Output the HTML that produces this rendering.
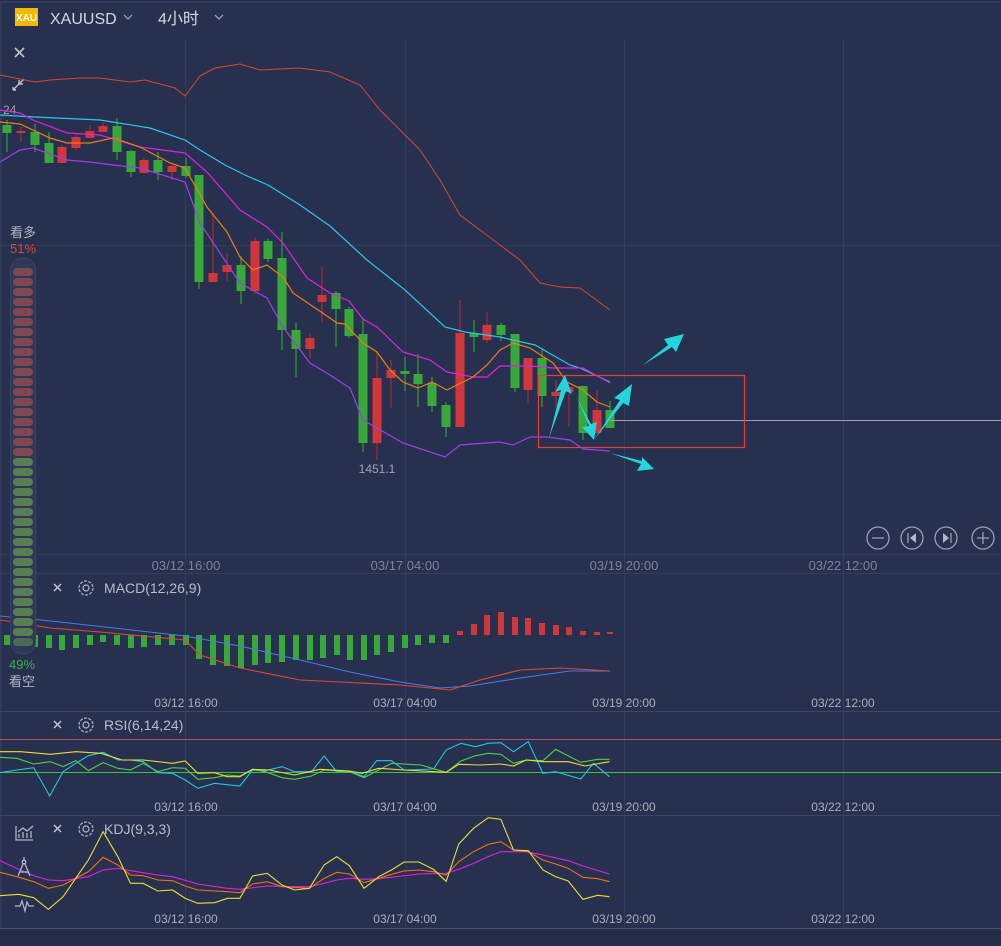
<!DOCTYPE html>
<html><head><meta charset="utf-8"><style>
html,body{margin:0;padding:0;background:#28304f;width:1001px;height:946px;overflow:hidden}
svg{display:block}
text{font-family:"Liberation Sans","Noto Sans CJK SC",sans-serif}
</style></head><body>
<svg width="1001" height="946" viewBox="0 0 1001 946" xmlns="http://www.w3.org/2000/svg">
<rect width="1001" height="946" fill="#28304f"/>
<rect y="929" width="1001" height="17" fill="#252c47"/>
<line x1="0" y1="2" x2="1001" y2="2" stroke="#3d4564"/>
<line x1="1" y1="2" x2="1" y2="929" stroke="#3d4564"/>
<line x1="0" y1="928.5" x2="1001" y2="928.5" stroke="#4a5270"/>
<!-- grid -->
<g stroke="#343c5c" stroke-width="1">
<line x1="185.5" y1="40" x2="185.5" y2="928"/><line x1="405.5" y1="40" x2="405.5" y2="928"/>
<line x1="624.5" y1="40" x2="624.5" y2="928"/><line x1="843.5" y1="40" x2="843.5" y2="928"/>
<line x1="0" y1="245.5" x2="1001" y2="245.5"/>
<line x1="0" y1="554.5" x2="1001" y2="554.5"/>
<line x1="0" y1="573.5" x2="1001" y2="573.5"/>
<line x1="0" y1="711.5" x2="1001" y2="711.5" stroke="#3d4564"/>
<line x1="0" y1="815.5" x2="1001" y2="815.5" stroke="#3d4564"/>
</g>
<!-- top bar -->
<rect x="15" y="8" width="23" height="18" fill="#f5b800"/>
<text x="26.5" y="21" font-size="10" fill="#fff" text-anchor="middle" font-weight="bold">XAU</text>
<text x="50" y="24" font-size="16" fill="#d4d8e0">XAUUSD</text>
<path d="M124 15l4 4 4-4" stroke="#9aa0b0" fill="none" stroke-width="1.3"/>
<text x="158" y="24" font-size="16" fill="#d4d8e0">4小时</text>
<path d="M215 15l4 4 4-4" stroke="#9aa0b0" fill="none" stroke-width="1.3"/>
<path d="M15 48l9 9M24 48l-9 9" stroke="#c0c4cc" stroke-width="1.6"/>
<path d="M13 90l6-6M13 90v-3M13 90h3M24 79l-5 5M19 84h4M19 84v-4" stroke="#c0c4cc" stroke-width="1.4" fill="none"/>
<text x="3" y="114" font-size="12" fill="#9aa0b0">24</text>
<!-- upper red band -->
<polyline fill="none" stroke="#d4472e" stroke-width="1" points="0,75 35,82 50,80 80,78 100,78 115,80 130,82 145,80 160,84 175,88 185,96 200,76 215,68 240,64 260,70 300,68 330,72 360,85 380,110 400,130 420,150 440,180 460,215 480,230 500,245 520,260 540,283 560,287 580,288 610,310"/>
<!-- candles -->
<g stroke-width="1.5">
<g stroke="#2d8a34" fill="#38a83a">
<line x1="7" y1="120" x2="7" y2="152"/><rect x="2.5" y="125" width="9" height="8" stroke="none"/>
<line x1="35" y1="124" x2="35" y2="152"/><rect x="30.5" y="132" width="9" height="13" stroke="none"/>
<line x1="49" y1="132" x2="49" y2="163"/><rect x="44.5" y="143" width="9" height="20" stroke="none"/>
<line x1="117" y1="118" x2="117" y2="160"/><rect x="112.5" y="126" width="9" height="26" stroke="none"/>
<line x1="131" y1="150" x2="131" y2="177"/><rect x="126.5" y="151" width="9" height="21" stroke="none"/>
<line x1="158" y1="152" x2="158" y2="180"/><rect x="153.5" y="160" width="9" height="12" stroke="none"/>
<line x1="186" y1="158" x2="186" y2="178"/><rect x="181.5" y="166" width="9" height="10" stroke="none"/>
<line x1="199" y1="175" x2="199" y2="289"/><rect x="194.5" y="175" width="9" height="107" stroke="none"/>
<line x1="241" y1="256" x2="241" y2="304"/><rect x="236.5" y="265" width="9" height="26" stroke="none"/>
<line x1="268" y1="239" x2="268" y2="262"/><rect x="263.5" y="241" width="9" height="18" stroke="none"/>
<line x1="282" y1="232" x2="282" y2="350"/><rect x="277.5" y="258" width="9" height="72" stroke="none"/>
<line x1="296" y1="323" x2="296" y2="377"/><rect x="291.5" y="330" width="9" height="19" stroke="none"/>
<line x1="336" y1="291" x2="336" y2="347"/><rect x="331.5" y="293" width="9" height="16" stroke="none"/>
<line x1="349" y1="307" x2="349" y2="338"/><rect x="344.5" y="309" width="9" height="27" stroke="none"/>
<line x1="363" y1="318" x2="363" y2="452"/><rect x="358.5" y="334" width="9" height="109" stroke="none"/>
<line x1="405" y1="357" x2="405" y2="391"/><rect x="400.5" y="371" width="9" height="3" stroke="none"/>
<line x1="418" y1="354" x2="418" y2="407"/><rect x="413.5" y="374" width="9" height="10" stroke="none"/>
<line x1="432" y1="377" x2="432" y2="412"/><rect x="427.5" y="383" width="9" height="23" stroke="none"/>
<line x1="446" y1="402" x2="446" y2="437"/><rect x="441.5" y="405" width="9" height="22" stroke="none"/>
<line x1="474" y1="320" x2="474" y2="352"/><rect x="469.5" y="333" width="9" height="4" stroke="none"/>
<line x1="501" y1="323" x2="501" y2="341"/><rect x="496.5" y="325" width="9" height="10" stroke="none"/>
<line x1="515" y1="334" x2="515" y2="392"/><rect x="510.5" y="334" width="9" height="54" stroke="none"/>
<line x1="542" y1="349" x2="542" y2="407"/><rect x="537.5" y="358" width="9" height="38" stroke="none"/>
<line x1="583" y1="386" x2="583" y2="440"/><rect x="578.5" y="386" width="9" height="47" stroke="none"/>
<line x1="610" y1="401" x2="610" y2="428"/><rect x="605.5" y="410" width="9" height="18" stroke="none"/>
</g>
<g stroke="#8e2c33" fill="#d1363a">
<line x1="21" y1="127" x2="21" y2="142"/><rect x="16.5" y="131" width="9" height="2" stroke="none"/>
<line x1="62" y1="145" x2="62" y2="163"/><rect x="57.5" y="147" width="9" height="16" stroke="none"/>
<line x1="76" y1="135" x2="76" y2="150"/><rect x="71.5" y="137" width="9" height="11" stroke="none"/>
<line x1="90" y1="125" x2="90" y2="138"/><rect x="85.5" y="131" width="9" height="7" stroke="none"/>
<line x1="103" y1="122" x2="103" y2="132"/><rect x="98.5" y="126" width="9" height="6" stroke="none"/>
<line x1="144" y1="158" x2="144" y2="173"/><rect x="139.5" y="160" width="9" height="13" stroke="none"/>
<line x1="172" y1="164" x2="172" y2="180"/><rect x="167.5" y="166" width="9" height="6" stroke="none"/>
<line x1="213" y1="213" x2="213" y2="282"/><rect x="208.5" y="273" width="9" height="9" stroke="none"/>
<line x1="227" y1="253" x2="227" y2="281"/><rect x="222.5" y="265" width="9" height="7" stroke="none"/>
<line x1="255" y1="237" x2="255" y2="294"/><rect x="250.5" y="241" width="9" height="50" stroke="none"/>
<line x1="310" y1="333" x2="310" y2="358"/><rect x="305.5" y="338" width="9" height="11" stroke="none"/>
<line x1="322" y1="267" x2="322" y2="322"/><rect x="317.5" y="295" width="9" height="7" stroke="none"/>
<line x1="377" y1="352" x2="377" y2="460"/><rect x="372.5" y="378" width="9" height="65" stroke="none"/>
<line x1="391" y1="360" x2="391" y2="408"/><rect x="386.5" y="370" width="9" height="8" stroke="none"/>
<line x1="460" y1="300" x2="460" y2="427"/><rect x="455.5" y="333" width="9" height="94" stroke="none"/>
<line x1="487" y1="312" x2="487" y2="343"/><rect x="482.5" y="325" width="9" height="15" stroke="none"/>
<line x1="528" y1="358" x2="528" y2="403"/><rect x="523.5" y="358" width="9" height="32" stroke="none"/>
<line x1="556" y1="380" x2="556" y2="407"/><rect x="551.5" y="392" width="9" height="4" stroke="none"/>
<line x1="569" y1="387" x2="569" y2="427"/><rect x="564.5" y="387" width="9" height="5" stroke="none"/>
<line x1="597" y1="390" x2="597" y2="433"/><rect x="592.5" y="410" width="9" height="23" stroke="none"/>
</g>
</g>
<!-- MAs -->
<g fill="none" stroke-width="1.2">
<polyline stroke="#28c8e8" points="0,115 35,117 100,120 150,128 185,140 200,150 225,165 245,175 268,185 300,205 330,226 367,260 405,290 445,327 465,332 500,337 535,345 570,365 580,368 610,382"/>
<polyline stroke="#e020e0" points="0,110 20,113 33,120 67,133 100,135 140,147 185,153 207,172 240,210 267,227 283,243 307,278 330,293 349,301 363,319 377,327 403,352 430,360 447,372 473,377 487,377 500,366 530,366 553,368 583,368 610,383"/>
<polyline stroke="#f07c10" points="0,122 20,124 50,138 67,143 90,143 113,138 140,147 170,163 185,168 207,207 227,232 240,257 253,270 267,265 283,277 293,293 330,318 337,323 345,324 363,343 377,352 390,370 403,382 418,388 432,382 447,390 473,377 487,365 500,350 513,343 530,348 553,363 567,382 583,390 597,402 610,407"/>
<polyline stroke="#9b40e8" points="0,162 20,150 33,148 67,160 90,162 113,165 140,168 185,182 200,223 240,283 267,298 283,327 310,363 330,375 350,388 363,420 403,443 445,457 460,445 500,442 513,445 530,437 547,437 570,440 583,449 610,451"/>
</g>
<text x="377" y="473" font-size="12" fill="#a0a6b4" text-anchor="middle">1451.1</text>
<line x1="610" y1="420.5" x2="1001" y2="420.5" stroke="#9aa0b0" stroke-width="1"/>
<rect x="538.5" y="375.5" width="206" height="72" fill="none" stroke="#e0403a" stroke-width="1.2"/>
<!-- arrows -->
<g fill="#22d6dc">
<polygon points="643,365 668,345 664,339 684,334 676,352 672,347"/>
<polygon points="549,438 561,390 555,392 565,375 572,394 566,391"/>
<polygon points="577,398 589,426 582,427 594,440 597,422 591,424"/>
<polygon points="594,440 620,400 614,398 632,384 629,406 623,403"/>
<polygon points="610,453 641,464 637,471 654,469 642,457 642,461"/>
</g>
<!-- zoom buttons -->
<g fill="none" stroke="#9aa0b0" stroke-width="1.3">
<circle cx="878" cy="538" r="11"/><circle cx="912" cy="538" r="11"/><circle cx="946" cy="538" r="11"/><circle cx="983" cy="538" r="11"/>
<path d="M872 538h12M977 538h12M983 532v12M908 533v10M951 533v10"/>
</g>
<polygon points="916,533 910,538 916,543" fill="#b0b6c4"/><polygon points="943,533 949,538 943,543" fill="#b0b6c4"/>
<!-- x labels -->
<g font-size="13" fill="#7c8296" text-anchor="middle">
<text x="186" y="570">03/12 16:00</text><text x="405" y="570">03/17 04:00</text><text x="624" y="570">03/19 20:00</text><text x="843" y="570">03/22 12:00</text>
</g>
<g font-size="12" fill="#a8aebb" text-anchor="middle">
<text x="186" y="707">03/12 16:00</text><text x="405" y="707">03/17 04:00</text><text x="624" y="707">03/19 20:00</text><text x="843" y="707">03/22 12:00</text>
<text x="186" y="811">03/12 16:00</text><text x="405" y="811">03/17 04:00</text><text x="624" y="811">03/19 20:00</text><text x="843" y="811">03/22 12:00</text>
<text x="186" y="923">03/12 16:00</text><text x="405" y="923">03/17 04:00</text><text x="624" y="923">03/19 20:00</text><text x="843" y="923">03/22 12:00</text>
</g>
<!-- headers -->
<g stroke="#c0c4cc" stroke-width="1.5">
<path d="M54 584l7 7M61 584l-7 7M54 721l7 7M61 721l-7 7M54 825l7 7M61 825l-7 7"/>
</g>
<g fill="none" stroke="#b0b6c4" stroke-width="1.2">
<circle cx="86" cy="588" r="3"/><circle cx="86" cy="588" r="7" stroke-dasharray="3 1.4"/>
<circle cx="86" cy="725" r="3"/><circle cx="86" cy="725" r="7" stroke-dasharray="3 1.4"/>
<circle cx="86" cy="829" r="3"/><circle cx="86" cy="829" r="7" stroke-dasharray="3 1.4"/>
</g>
<g font-size="14" fill="#b8bdc8">
<text x="104" y="593">MACD(12,26,9)</text><text x="104" y="730">RSI(6,14,24)</text><text x="104" y="834">KDJ(9,3,3)</text>
</g>
<!-- MACD bars -->
<g fill="#38a83a">
<rect x="4" y="635" width="6" height="10"/><rect x="18" y="635" width="6" height="13"/><rect x="32" y="635" width="6" height="12"/><rect x="46" y="635" width="6" height="13"/><rect x="59" y="635" width="6" height="15"/><rect x="73" y="635" width="6" height="13"/><rect x="87" y="635" width="6" height="10"/><rect x="100" y="635" width="6" height="7"/><rect x="114" y="635" width="6" height="10"/><rect x="128" y="635" width="6" height="13"/><rect x="141" y="635" width="6" height="12"/><rect x="155" y="635" width="6" height="10"/><rect x="169" y="635" width="6" height="10"/><rect x="183" y="635" width="6" height="10"/><rect x="196" y="635" width="6" height="24"/><rect x="210" y="635" width="6" height="30"/><rect x="224" y="635" width="6" height="31"/><rect x="238" y="635" width="6" height="33"/><rect x="252" y="635" width="6" height="30"/><rect x="265" y="635" width="6" height="28"/><rect x="279" y="635" width="6" height="27"/><rect x="293" y="635" width="6" height="25"/><rect x="307" y="635" width="6" height="25"/><rect x="320" y="635" width="6" height="23"/><rect x="334" y="635" width="6" height="20"/><rect x="347" y="635" width="6" height="25"/><rect x="361" y="635" width="6" height="25"/><rect x="374" y="635" width="6" height="20"/><rect x="388" y="635" width="6" height="17"/><rect x="402" y="635" width="6" height="13"/><rect x="415" y="635" width="6" height="10"/><rect x="429" y="635" width="6" height="8"/><rect x="443" y="635" width="6" height="8"/>
</g>
<g fill="#d1363a">
<rect x="457" y="631" width="6" height="4"/><rect x="471" y="624" width="6" height="11"/><rect x="484" y="615" width="6" height="20"/><rect x="498" y="612" width="6" height="23"/><rect x="512" y="617" width="6" height="18"/><rect x="525" y="618" width="6" height="17"/><rect x="539" y="623" width="6" height="12"/><rect x="553" y="625" width="6" height="10"/><rect x="566" y="627" width="6" height="8"/><rect x="580" y="631" width="6" height="4"/><rect x="594" y="632" width="6" height="3"/><rect x="607" y="632" width="6" height="2"/>
</g>
<g fill="none" stroke-width="1.1">
<polyline stroke="#4a78e8" points="0,616 60,622 185,636 240,646 300,660 350,672 400,682 440,688 470,686 520,678 570,671 610,671"/>
<polyline stroke="#e0482c" points="0,620 50,628 100,632 185,640 200,655 240,668 300,680 340,682 400,685 450,690 480,680 520,670 560,668 610,671"/>
</g>
<!-- RSI -->
<line x1="0" y1="739.5" x2="1001" y2="739.5" stroke="#b05060" stroke-width="1"/>
<line x1="0" y1="772.5" x2="1001" y2="772.5" stroke="#3cc040" stroke-width="1"/>
<g transform="translate(0,710) scale(0.4209,0.33333)" fill="none" stroke-width="1.1">
<polyline vector-effect="non-scaling-stroke" stroke="#20c8e0" points="0,188 40,180 80,173 118,258 150,185 180,160 210,137 245,127 280,150 310,150 340,155 375,188 410,190 440,210 470,235 510,220 570,228 600,180 630,182 670,170 700,185 740,185 770,138 800,185 830,183 865,200 895,152 930,152 960,180 1030,177 1060,120 1095,100 1130,110 1160,100 1190,98 1220,125 1255,95 1290,190 1320,185 1380,207 1410,160 1448,200"/>
<polyline vector-effect="non-scaling-stroke" stroke="#50d040" points="0,142 40,145 80,162 120,155 150,170 180,152 210,182 245,158 280,175 310,180 340,160 375,185 410,173 440,175 470,208 510,203 540,195 570,198 600,178 630,185 670,203 700,208 740,198 770,180 830,185 865,203 900,180 930,160 1000,165 1060,187 1095,153 1130,137 1160,130 1190,133 1220,160 1250,150 1290,152 1320,118 1380,157 1420,148 1448,148"/>
<polyline vector-effect="non-scaling-stroke" stroke="#e8e030" points="0,125 50,125 120,133 180,125 240,130 290,150 340,150 410,160 440,153 470,190 510,188 540,200 570,200 600,178 640,180 700,195 760,178 830,183 860,190 900,175 960,180 1060,187 1090,163 1140,165 1190,162 1220,168 1250,150 1290,155 1350,155 1390,168 1448,155"/>
</g>
<!-- KDJ -->
<g transform="translate(0,710) scale(0.4209,0.33333)" fill="none" stroke-width="1.1">
<polyline vector-effect="non-scaling-stroke" stroke="#e020e0" points="0,452 40,475 80,497 115,510 150,512 210,500 245,480 280,475 310,482 340,488 375,495 410,500 470,522 540,535 570,538 635,528 700,530 735,530 770,520 800,510 830,505 865,508 900,506 930,502 995,492 1060,490 1090,478 1125,460 1160,440 1190,425 1250,425 1290,435 1350,452 1385,468 1448,492"/>
<polyline vector-effect="non-scaling-stroke" stroke="#f07010" points="0,487 40,500 80,515 115,535 150,525 210,485 245,442 280,465 310,495 340,497 375,510 410,512 440,528 470,540 540,545 570,548 600,522 635,515 670,530 735,535 770,505 800,487 830,492 865,518 900,505 930,493 960,483 995,480 1030,485 1060,495 1090,455 1125,425 1160,403 1190,395 1220,420 1255,425 1290,450 1320,462 1350,475 1385,502 1420,506 1448,515"/>
<polyline vector-effect="non-scaling-stroke" stroke="#e8e030" points="0,557 45,553 80,563 115,598 150,560 210,450 245,365 280,440 310,520 340,520 375,543 410,540 440,565 470,580 510,578 540,565 570,565 600,498 635,490 670,525 700,540 735,535 770,465 800,440 830,467 865,535 900,500 930,480 960,456 995,456 1030,478 1060,514 1090,402 1125,355 1160,323 1190,328 1220,420 1255,422 1290,480 1320,500 1350,513 1385,568 1420,556 1448,560"/>
</g>
<!-- KDJ side icons -->
<g fill="none" stroke="#b0b6c4" stroke-width="1.3">
<path d="M16 826v14h17M19 838v-4M23 838v-6M27 838v-5M31 838v-7M18 832l5-4 4 3 6-5"/>
<circle cx="24" cy="862" r="1.8"/><path d="M24 860v-3M23 864l-5 12M25 864l5 12M19 872h10"/>
<path d="M15 906h5l2-5 3 10 2-9 2 4h5"/>
</g>
<!-- gauge -->
<text x="10" y="237" font-size="13" fill="#b0b6c4">看多</text>
<text x="10" y="253" font-size="13" fill="#d9483a">51%</text>
<rect x="10.5" y="258" width="25" height="396" rx="12" fill="#303858" stroke="#3a4262"/>
<g fill="#7e4850">
<rect x="13" y="268" width="20" height="8" rx="4"/><rect x="13" y="278" width="20" height="8" rx="4"/><rect x="13" y="288" width="20" height="8" rx="4"/><rect x="13" y="298" width="20" height="8" rx="4"/><rect x="13" y="308" width="20" height="8" rx="4"/><rect x="13" y="318" width="20" height="8" rx="4"/><rect x="13" y="328" width="20" height="8" rx="4"/><rect x="13" y="338" width="20" height="8" rx="4"/><rect x="13" y="348" width="20" height="8" rx="4"/><rect x="13" y="358" width="20" height="8" rx="4"/><rect x="13" y="368" width="20" height="8" rx="4"/><rect x="13" y="378" width="20" height="8" rx="4"/><rect x="13" y="388" width="20" height="8" rx="4"/><rect x="13" y="398" width="20" height="8" rx="4"/><rect x="13" y="408" width="20" height="8" rx="4"/><rect x="13" y="418" width="20" height="8" rx="4"/><rect x="13" y="428" width="20" height="8" rx="4"/><rect x="13" y="438" width="20" height="8" rx="4"/><rect x="13" y="448" width="20" height="8" rx="4"/>
</g>
<g fill="#587f54">
<rect x="13" y="458" width="20" height="8" rx="4"/><rect x="13" y="468" width="20" height="8" rx="4"/><rect x="13" y="478" width="20" height="8" rx="4"/><rect x="13" y="488" width="20" height="8" rx="4"/><rect x="13" y="498" width="20" height="8" rx="4"/><rect x="13" y="508" width="20" height="8" rx="4"/><rect x="13" y="518" width="20" height="8" rx="4"/><rect x="13" y="528" width="20" height="8" rx="4"/><rect x="13" y="538" width="20" height="8" rx="4"/><rect x="13" y="548" width="20" height="8" rx="4"/><rect x="13" y="558" width="20" height="8" rx="4"/><rect x="13" y="568" width="20" height="8" rx="4"/><rect x="13" y="578" width="20" height="8" rx="4"/><rect x="13" y="588" width="20" height="8" rx="4"/><rect x="13" y="598" width="20" height="8" rx="4"/><rect x="13" y="608" width="20" height="8" rx="4"/><rect x="13" y="618" width="20" height="8" rx="4"/><rect x="13" y="628" width="20" height="8" rx="4"/><rect x="13" y="638" width="20" height="8" rx="4" opacity="0.7"/>
</g>
<text x="9" y="669" font-size="13" fill="#3cb048">49%</text>
<text x="9" y="686" font-size="13" fill="#b0b6c4">看空</text>
</svg>
</body></html>
